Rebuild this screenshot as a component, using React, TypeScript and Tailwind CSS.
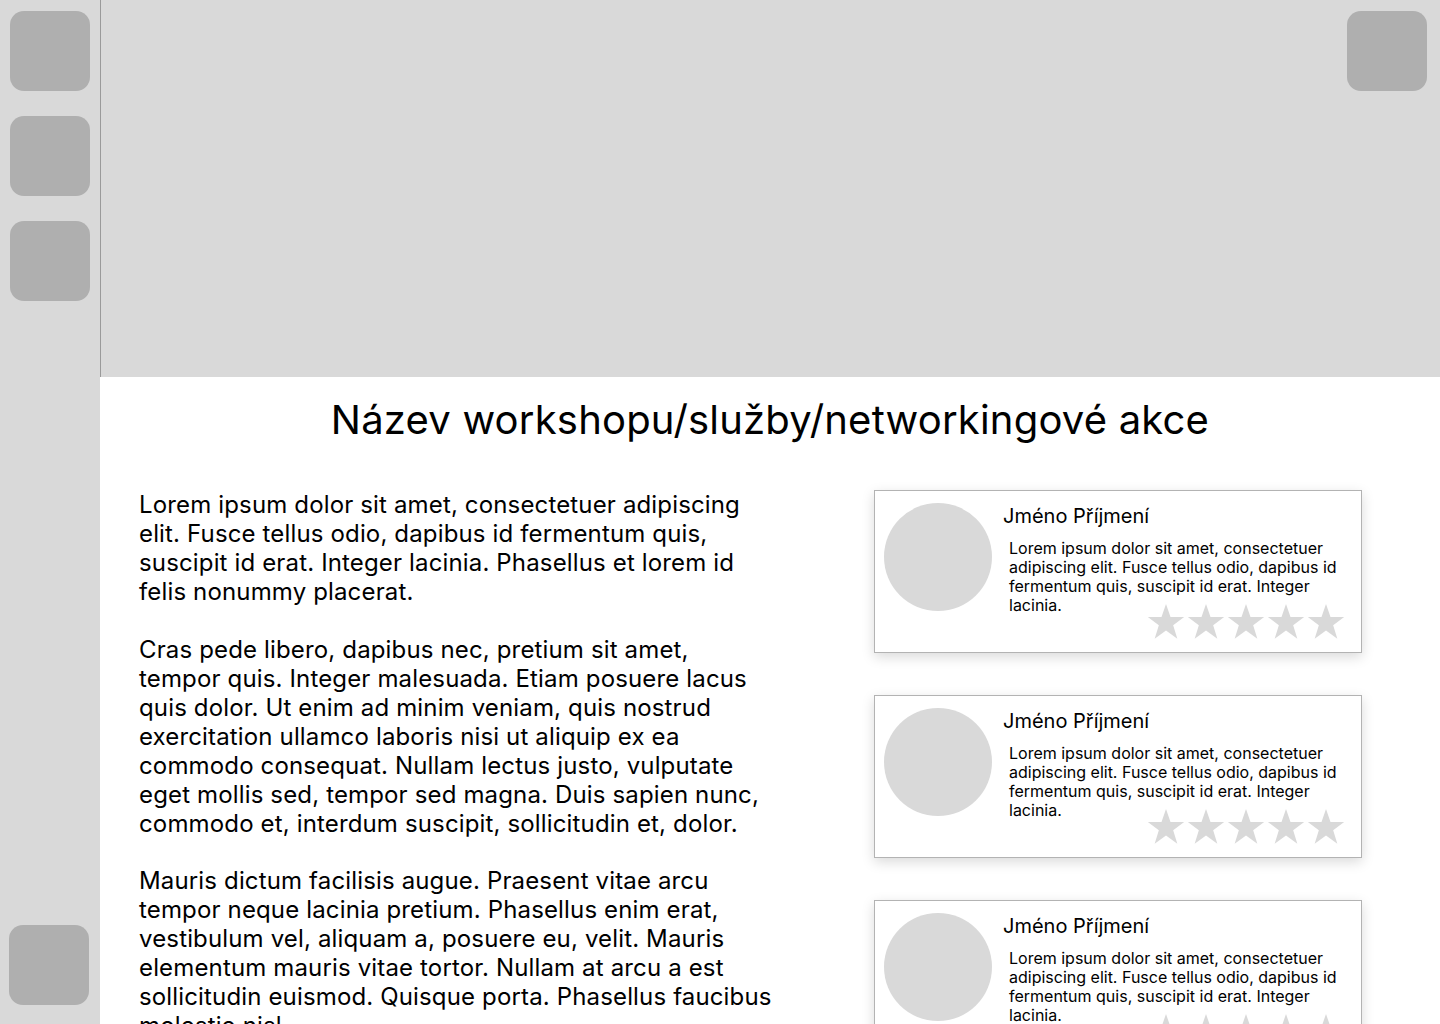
const paragraphs = [
  "Lorem ipsum dolor sit amet, consectetuer adipiscing elit. Fusce tellus odio, dapibus id fermentum quis, suscipit id erat. Integer lacinia. Phasellus et lorem id felis nonummy placerat.",
  "Cras pede libero, dapibus nec, pretium sit amet, tempor quis. Integer malesuada. Etiam posuere lacus quis dolor. Ut enim ad minim veniam, quis nostrud exercitation ullamco laboris nisi ut aliquip ex ea commodo consequat. Nullam lectus justo, vulputate eget mollis sed, tempor sed magna. Duis sapien nunc, commodo et, interdum suscipit, sollicitudin et, dolor.",
  "Mauris dictum facilisis augue. Praesent vitae arcu tempor neque lacinia pretium. Phasellus enim erat, vestibulum vel, aliquam a, posuere eu, velit. Mauris elementum mauris vitae tortor. Nullam at arcu a est sollicitudin euismod. Quisque porta. Phasellus faucibus molestie nisl.",
];

const reviews = [1, 2, 3];

function Star() {
  return (
    <svg width="40" height="40" viewBox="0 0 24 24" aria-hidden="true">
      <polygon
        points="12,1.2 14.7,9 22.9,9 16.3,13.9 18.8,22 12,17.1 5.2,22 7.7,13.9 1.1,9 9.3,9"
        fill="#d9d9d9"
      />
    </svg>
  );
}

function ReviewCard() {
  return (
    <div className="relative h-[163px] w-[488px] border border-[#b3b3b3] bg-white shadow-[0_4px_12px_rgba(0,0,0,0.15)]">
      <div className="flex pl-[9px] pt-[12px]">
        <div className="h-[108px] w-[108px] shrink-0 rounded-full bg-[#d9d9d9]" />
        <div className="ml-[11px] pt-[1px]">
          <p className="text-[20px] leading-[24px] text-black">Jméno Příjmení</p>
          <p className="mt-[11px] ml-[6px] w-[330px] text-[16px] leading-[19px] text-black">
            Lorem ipsum dolor sit amet, consectetuer adipiscing elit. Fusce tellus odio, dapibus id fermentum quis, suscipit id erat. Integer lacinia.
          </p>
        </div>
      </div>
      <div className="absolute bottom-[10px] right-[15px] flex">
        {[0, 1, 2, 3, 4].map((i) => (
          <Star key={i} />
        ))}
      </div>
    </div>
  );
}

export default function App() {
  return (
    <div
      className="flex h-screen overflow-hidden bg-white text-black"
      style={{ fontFamily: "Inter, 'Noto Sans', sans-serif" }}
    >
      <aside className="flex h-full w-[100px] shrink-0 flex-col justify-between bg-[#d9d9d9] pb-[19px] pt-[11px]">
        <div className="flex flex-col gap-[25px] pl-[10px]">
          <div className="h-[80px] w-[80px] rounded-[14px] bg-[#afafaf]" />
          <div className="h-[80px] w-[80px] rounded-[14px] bg-[#afafaf]" />
          <div className="h-[80px] w-[80px] rounded-[14px] bg-[#afafaf]" />
        </div>
        <div className="pl-[9px]">
          <div className="h-[80px] w-[80px] rounded-[14px] bg-[#afafaf]" />
        </div>
      </aside>

      <main className="min-w-0 flex-1">
        <div className="flex h-[377px] justify-end border-l border-[#9a9a9a] bg-[#d9d9d9] pr-[13px] pt-[11px]">
          <div className="h-[80px] w-[80px] rounded-[14px] bg-[#afafaf]" />
        </div>

        <h1 className="mt-[19px] text-center text-[40px] font-normal leading-[48px] tracking-[0.2px]">
          Název workshopu/služby/networkingové akce
        </h1>

        <div className="mt-[46px] flex justify-between pl-[39px] pr-[78px]">
          <div className="flex w-[634px] flex-col gap-[28.5px] text-[24px] leading-[29px] tracking-[0.15px]">
            {paragraphs.map((p) => (
              <p key={p.slice(0, 12)}>{p}</p>
            ))}
          </div>
          <div className="flex flex-col gap-[42px]">
            {reviews.map((r) => (
              <ReviewCard key={r} />
            ))}
          </div>
        </div>
      </main>
    </div>
  );
}
